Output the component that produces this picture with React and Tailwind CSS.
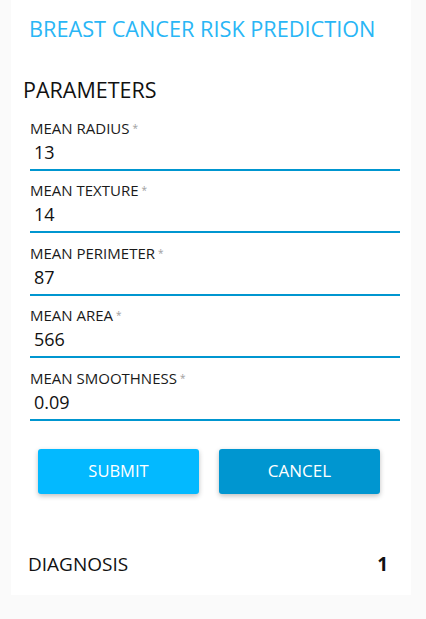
const FIELDS = [
  { label: 'MEAN RADIUS', value: '13' },
  { label: 'MEAN TEXTURE', value: '14' },
  { label: 'MEAN PERIMETER', value: '87' },
  { label: 'MEAN AREA', value: '566' },
  { label: 'MEAN SMOOTHNESS', value: '0.09' },
]

function Field({ label, value }) {
  return (
    <div className="pt-[9.5px]">
      <div className="text-[15px] leading-[20px] text-[#1a1a1a]">
        {label}
        <span className="text-[10px] text-[#9e9e9e] align-top ml-[3px]">*</span>
      </div>
      <div className="text-[18px] leading-[28px] text-[#111] pl-[4px] pb-[3px] border-b-2 border-[#0096d0]">
        {value}
      </div>
    </div>
  )
}

export default function App() {
  return (
    <div className="min-h-screen bg-[#fafafa]" style={{ fontFamily: '"Open Sans", "Noto Sans", sans-serif' }}>
      <div className="ml-[11px] w-[400px] bg-white pb-[18px]">
        <h1 className="pl-[18px] pt-[14px] text-[21.7px] leading-[30px] text-[#29b6f6]">
          BREAST CANCER RISK PREDICTION
        </h1>
        <h2 className="pl-[12px] mt-[31px] text-[21.5px] leading-[30px] text-[#111]">PARAMETERS</h2>
        <div className="pl-[19px] pr-[11px] pt-[3px]">
          {FIELDS.map(f => (
            <Field key={f.label} {...f} />
          ))}
        </div>
        <div className="flex gap-[20px] pl-[27px] mt-[28px]">
          <button className="w-[161px] h-[45px] rounded-[3px] bg-[#03b9ff] text-white text-[16.5px] shadow-[0_2px_5px_rgba(0,0,0,0.25)]">
            SUBMIT
          </button>
          <button className="w-[161px] h-[45px] rounded-[3px] bg-[#0096d0] text-white text-[17px] shadow-[0_2px_5px_rgba(0,0,0,0.25)]">
            CANCEL
          </button>
        </div>
        <div className="flex justify-between items-center pl-[17px] pr-[23px] mt-[57px] text-[19px] leading-[26px] text-[#111]">
          <span>DIAGNOSIS</span>
          <span className="font-bold">1</span>
        </div>
      </div>
    </div>
  )
}
